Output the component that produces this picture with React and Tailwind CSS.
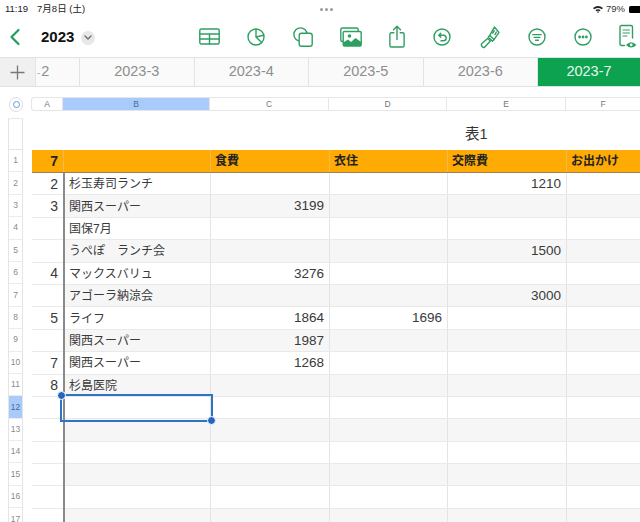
const G = "#2f9e62";
const FONT = { fontFamily: '"Liberation Sans","Noto Sans CJK JP",sans-serif' };

function Ic({ w = 24, h = 24, className = "", children }) {
  return (
    <svg width={w} height={h} viewBox={`0 0 ${w} ${h}`} fill="none" stroke={G} strokeWidth="1.4" strokeLinecap="round" strokeLinejoin="round" className={`shrink-0 ${className}`}>
      {children}
    </svg>
  );
}

const tabs = ["2023-3", "2023-4", "2023-5", "2023-6"];
const cols = [
  { k: "A", w: "w-[31px]" },
  { k: "B", w: "w-[147px]" },
  { k: "C", w: "w-[119px]" },
  { k: "D", w: "w-[118px]" },
  { k: "E", w: "w-[119px]" },
  { k: "F", w: "w-[74px]" },
];

const rows = [
  ["2", "杉玉寿司ランチ", "", "", "1210"],
  ["3", "関西スーパー", "3199", "", ""],
  ["", "国保7月", "", "", ""],
  ["", "うぺぽ　ランチ会", "", "", "1500"],
  ["4", "マックスバリュ", "3276", "", ""],
  ["", "アゴーラ納涼会", "", "", "3000"],
  ["5", "ライフ", "1864", "1696", ""],
  ["", "関西スーパー", "1987", "", ""],
  ["7", "関西スーパー", "1268", "", ""],
  ["8", "杉島医院", "", "", ""],
  ["", "", "", "", ""],
  ["", "", "", "", ""],
  ["", "", "", "", ""],
  ["", "", "", "", ""],
  ["", "", "", "", ""],
  ["", "", "", "", ""],
];

export default function App() {
  return (
    <div style={FONT} className="w-[640px] h-[522px] overflow-hidden bg-white relative text-[#333]">
      {/* status bar */}
      <div className="h-[18px] flex items-center pl-[5px] text-[9.5px] text-[#222]">
        <div className="w-[315px] flex gap-[9px]"><span>11:19</span><span>7月8日 (土)</span></div>
        <div className="flex gap-[2px]">
          <span className="w-[3px] h-[3px] rounded-full bg-[#999]"></span>
          <span className="w-[3px] h-[3px] rounded-full bg-[#999]"></span>
          <span className="w-[3px] h-[3px] rounded-full bg-[#999]"></span>
        </div>
        <div className="ml-auto flex items-center gap-[3px]">
          <svg width="10" height="8" viewBox="0 0 10 8" fill="#222"><path d="M0 3 Q5 -1 10 3 L8.8 4.2 Q5 1.6 1.2 4.2Z" /><path d="M2.4 5.2 Q5 3.4 7.6 5.2 L6.4 6.3 Q5 5.4 3.6 6.3Z" /><path d="M4 7 L5 6.2 L6 7 L5 8Z" /></svg>
          <span className="text-[#333]">79%</span>
          <span className="w-[11px] h-[7px] bg-black rounded-l-[1.5px] ml-[1px]"></span>
        </div>
      </div>

      {/* toolbar */}
      <div className="h-[39px] flex items-center">
        <svg width="12" height="18" viewBox="0 0 12 18" fill="none" stroke="#1f9d5c" strokeWidth="2.2" strokeLinecap="round" strokeLinejoin="round" className="ml-[9px] mb-[1px]"><path d="M9.5 2 L2.5 9 L9.5 16" /></svg>
        <span className="ml-[20px] text-[15px] font-bold text-[#111]">2023</span>
        <span className="ml-[7px] w-[14px] h-[14px] rounded-full bg-[#e7e7e7] flex items-center justify-center">
          <svg width="8" height="5" viewBox="0 0 8 5" fill="none" stroke="#666" strokeWidth="1.2" strokeLinecap="round" strokeLinejoin="round"><path d="M1 1 L4 4 L7 1" /></svg>
        </span>
        <div className="ml-[104px] mb-[2px] flex items-center">
          <Ic w={21} h={17}>
            <rect x="0.8" y="1" width="19.4" height="15" rx="1.5" />
            <path d="M0.8 6H20.2M0.8 11H20.2M10.5 6V16" />
          </Ic>
          <Ic w={18} h={18} className="ml-[27px]">
            <circle cx="9" cy="9" r="8" />
            <path d="M9 1.2V9L14.6 14.6M9 9L16.6 7.2" />
          </Ic>
          <Ic w={20} h={20} className="ml-[28px]">
            <circle cx="7.5" cy="7.5" r="6.6" />
            <rect x="6.2" y="6.2" width="13" height="13" rx="2.2" fill="white" />
          </Ic>
          <Ic w={22} h={20} className="ml-[27px]">
            <path d="M3 14.5H2.2A1.4 1.4 0 0 1 0.8 13.1V2.4A1.4 1.4 0 0 1 2.2 1H16.8A1.4 1.4 0 0 1 18.2 2.4V4" />
            <rect x="3.2" y="4.5" width="18" height="14.5" rx="1.3" fill="white" />
            <circle cx="9.5" cy="9" r="1.8" stroke="none" fill={G} />
            <path d="M3.2 19V15.5L8 12.5L11 15L15.5 11L21.2 15V19Z" stroke="none" fill={G} />
          </Ic>
          <Ic w={16} h={23} className="ml-[27px]">
            <path d="M4.8 7.8H2.2A1.3 1.3 0 0 0 0.9 9.1V20.7A1.3 1.3 0 0 0 2.2 22H13.8A1.3 1.3 0 0 0 15.1 20.7V9.1A1.3 1.3 0 0 0 13.8 7.8H11.2" />
            <path d="M8 14.5V1.5M4.5 4.8L8 1.2L11.5 4.8" />
          </Ic>
          <Ic w={18} h={18} className="ml-[28px]">
            <circle cx="9" cy="9" r="8" />
            <path d="M5.8 7.2H10.4A2.8 2.8 0 0 1 10.4 12.8H8M7.8 5.2L5.7 7.2L7.8 9.3" />
          </Ic>
          <Ic w={20} h={24} className="ml-[29px]">
            <path d="M1.6 18.8L7.6 13.4L10.4 16L4.6 22.2C3.4 23.4 0.6 21 1.6 18.8Z" />
            <path d="M8.2 12L12.4 16.2L14 14.6L9.8 10.4Z" />
            <path d="M9.8 10.4L14.4 2L19 7.4L14 14.6M14.2 5.6L12.8 8.2M16.4 7L15 9.6" />
          </Ic>
          <Ic w={18} h={18} className="ml-[28px]">
            <circle cx="9" cy="9" r="8" />
            <path d="M4.8 6.6H13.2M6.2 9.4H11.8M7.6 12.2H10.4" />
          </Ic>
          <Ic w={18} h={18} className="ml-[28px]">
            <circle cx="9" cy="9" r="8" />
            <circle cx="5.6" cy="9" r="0.7" fill={G} />
            <circle cx="9" cy="9" r="0.7" fill={G} />
            <circle cx="12.4" cy="9" r="0.7" fill={G} />
          </Ic>
          <Ic w={18} h={26} className="ml-[27px]">
            <path d="M5.5 21.5H2.5A1.5 1.5 0 0 1 1 20V3A1.5 1.5 0 0 1 2.5 1.5H12A1.5 1.5 0 0 1 13.5 3V14" />
            <path d="M4 6H10.5M4 9H10.5M4 12H8" strokeWidth="1.1" />
            <path d="M7 21Q12 15.5 17.5 21Q12 26 7 21Z" fill={G} stroke="none" />
            <circle cx="12.2" cy="20.8" r="1.4" fill="white" stroke="none" />
          </Ic>
        </div>
      </div>

      {/* sheet tabs */}
      <div className="h-[30px] flex bg-[#fafafa] border-y border-[#e2e2e2] text-[14.5px] text-[#8e8e8e]">
        <div className="w-[36px] shrink-0 bg-[#f0f0f0] flex items-center justify-center border-r border-[#e4e4e4]">
          <svg width="15" height="15" viewBox="0 0 15 15" stroke="#777" strokeWidth="1.3"><path d="M7.5 0.5V14.5M0.5 7.5H14.5" /></svg>
        </div>
        <div className="w-[44px] shrink-0 flex items-center pl-[1px] border-r border-[#e4e4e4]"><span className="text-[#aaa] text-[10px] mr-[1px]">-</span>2</div>
        {tabs.map((t) => (
          <div key={t} className="w-[114.5px] shrink-0 flex items-center justify-center border-r border-[#e4e4e4]">{t}</div>
        ))}
        <div className="flex-1 bg-[#0ca24f] text-[#e8f7ee] flex items-center justify-center">2023-7</div>
      </div>

      {/* column headers */}
      <div className="mt-[10px] h-[14px] flex items-center">
        <div className="w-[15px] h-[15px] ml-[9px] mr-[8px] rounded-full border border-[#ddd] flex items-center justify-center">
          <span className="w-[7px] h-[7px] rounded-full border border-[#5a9bea]"></span>
        </div>
        <div className="flex h-full border-y border-[#e6e6e6] rounded-l-[3px] border-l text-[8.5px] text-[#777]">
          {cols.map((c) => (
            <div key={c.k} className={`${c.w} h-full flex items-center justify-center border-r border-[#e6e6e6] last:border-r-0 ${c.k === "B" ? "bg-[#a9cbfb] text-[#4d6a95]" : ""}`}>{c.k}</div>
          ))}
        </div>
      </div>

      {/* sheet */}
      <div className="flex mt-[7px]">
        {/* row headers */}
        <div className="w-[15px] ml-[8px] shrink-0 border-x border-[#e4e4e4] text-[8.5px] text-[#8a8a8a]">
          <div className="h-[32px] border-y border-[#e4e4e4] rounded-t-[3px]"></div>
          {Array.from({ length: 17 }, (_, i) => (
            <div key={i} className={`h-[22.4px] flex items-center justify-center border-b border-[#ececec] ${i === 11 ? "bg-[#a9cbfb] text-[#4d6a95]" : ""}`}>{i + 1}</div>
          ))}
        </div>

        {/* table */}
        <div className="ml-[9px] relative flex-1 min-w-0">
          <div className="h-[32px] flex items-center pl-[433px] pt-[1px] text-[14.5px] text-[#333]">表1</div>
          <div className="flex h-[23px] bg-[#ffab03] text-[12px] font-bold text-[#222] border-b border-[#9a8256]">
            <div className="w-[31px] flex items-center justify-end pr-[5px] text-[14px]">7</div>
            <div className="w-[147px] border-l border-[#f2bb50]"></div>
            <div className="w-[119px] border-l border-[#f2bb50] flex items-center pl-[4px]">食費</div>
            <div className="w-[118px] border-l border-[#f2bb50] flex items-center pl-[4px]">衣住</div>
            <div className="w-[119px] border-l border-[#f2bb50] flex items-center pl-[4px]">交際費</div>
            <div className="flex-1 border-l border-[#f2bb50] flex items-center pl-[4px]">お出かけ</div>
          </div>
          {rows.map((r, i) => (
            <div key={i} className={`flex h-[22.4px] border-b border-[#e9e9e9] text-[12px] text-[#3a3a3a] ${i % 2 === 1 ? "bg-[#f6f6f6]" : "bg-white"}`}>
              <div className="w-[31px] flex items-center justify-end pr-[5px] pt-[1px] text-[14px] bg-white">{r[0]}</div>
              <div className="w-[147px] flex items-center pl-[6px] pt-[1px]">{r[1]}</div>
              <div className="w-[119px] border-l border-[#e4e4e4] flex items-center justify-end pr-[5px] pt-[1px] text-[13.5px]">{r[2]}</div>
              <div className="w-[118px] border-l border-[#e4e4e4] flex items-center justify-end pr-[5px] pt-[1px] text-[13.5px]">{r[3]}</div>
              <div className="w-[119px] border-l border-[#e4e4e4] flex items-center justify-end pr-[5px] pt-[1px] text-[13.5px]">{r[4]}</div>
              <div className="flex-1 border-l border-[#e4e4e4]"></div>
            </div>
          ))}
          {/* frozen column divider */}
          <div className="absolute left-[31px] top-[55px] bottom-0 w-[1.5px] bg-[#8a8a8a]"></div>
          {/* selection */}
          <div className="absolute left-[28px] top-[276px] w-[153px] h-[28px] border-2 border-[#2d74c4]">
            <span className="absolute -left-[5px] -top-[5px] w-[7px] h-[7px] rounded-full bg-[#2367c0] border border-white box-content"></span>
            <span className="absolute -right-[5px] -bottom-[5px] w-[7px] h-[7px] rounded-full bg-[#2367c0] border border-white box-content"></span>
          </div>
        </div>
      </div>
    </div>
  );
}
